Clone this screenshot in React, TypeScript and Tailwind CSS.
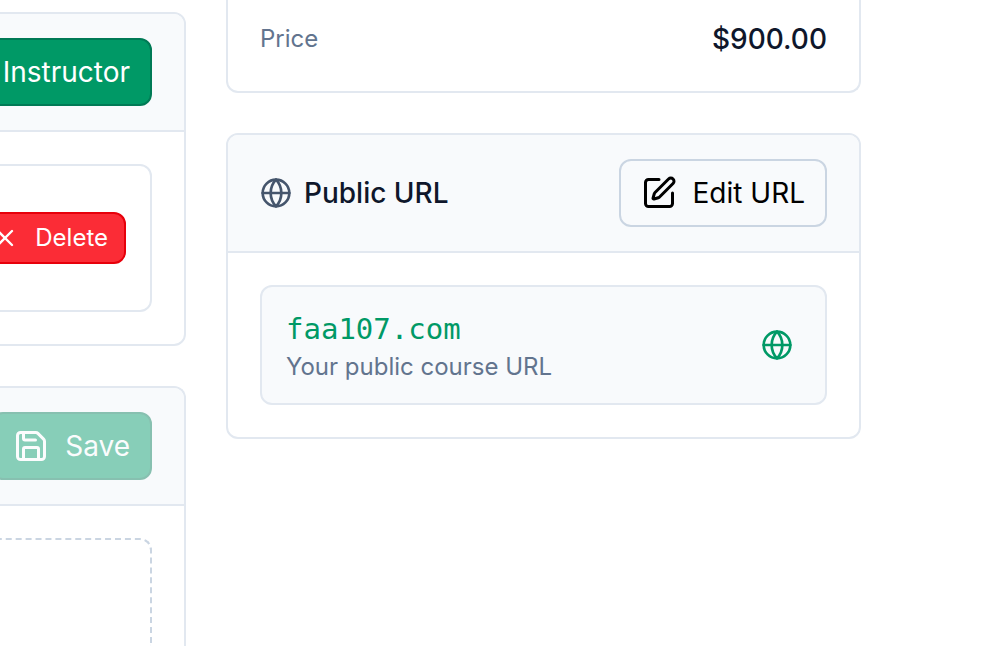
import type { ReactNode } from "react";
import { Globe, Save, SquarePen, X } from "lucide-react";
import { clsx } from "clsx";

const variants = {
  primary: "border-[#007a55] bg-[#009966] text-white",
  outline: "border-[#cad5e2] bg-[#f8fafc] text-black",
};

function Button({
  variant,
  disabled,
  className,
  children,
}: {
  variant: keyof typeof variants;
  disabled?: boolean;
  className?: string;
  children: ReactNode;
}) {
  return (
    <button
      type="button"
      disabled={disabled}
      className={clsx(
        "flex h-[68px] shrink-0 items-center gap-4 rounded-xl border-2 px-5 text-[28px]",
        "disabled:opacity-45",
        variants[variant],
        className
      )}
    >
      {children}
    </button>
  );
}

function CardHeader({ children }: { children: ReactNode }) {
  return (
    <header className="flex items-center justify-end border-b-2 border-slate-200 bg-[#f8fafc] px-8 py-6">
      {children}
    </header>
  );
}

export default function App() {
  return (
    <main className="flex h-screen gap-10 overflow-hidden bg-white font-['Inter',sans-serif] text-slate-900">
      {/* Main column, scrolled partly off the left edge */}
      <div className="-ml-20 flex w-[266px] shrink-0 flex-col gap-10 pt-3">
        <section className="overflow-hidden rounded-xl border-2 border-slate-200">
          <CardHeader>
            <Button variant="primary" className="pl-16">
              Instructor
            </Button>
          </CardHeader>
          <div className="p-8">
            <div className="flex h-[148px] items-center justify-end rounded-xl border-2 border-slate-200 px-6">
              <button
                type="button"
                className="flex h-[52px] shrink-0 items-center gap-4 rounded-xl border-2 border-[#e7000b] bg-[#fb2c36] px-4 text-2xl text-white"
              >
                <X size={28} />
                Delete
              </button>
            </div>
          </div>
        </section>

        <section className="flex flex-1 flex-col overflow-hidden rounded-t-xl border-2 border-b-0 border-slate-200">
          <CardHeader>
            <Button variant="primary" disabled>
              <Save size={36} />
              Save
            </Button>
          </CardHeader>
          <div className="flex flex-1 px-8 pt-8">
            <div className="flex-1 rounded-t-xl border-2 border-b-0 border-dashed border-slate-300" />
          </div>
        </section>
      </div>

      {/* Sidebar */}
      <aside className="mr-[145px] flex min-w-0 flex-1 flex-col gap-10">
        <section className="rounded-b-xl border-2 border-t-0 border-slate-200 px-8 pt-[19px] pb-8">
          <dl className="flex items-center justify-between">
            <dt className="text-2xl text-slate-500">Price</dt>
            <dd className="text-[28px] leading-10 font-medium">$900.00</dd>
          </dl>
        </section>

        <section className="overflow-hidden rounded-xl border-2 border-slate-200">
          <CardHeader>
            <h2 className="flex flex-1 items-center gap-3 text-[28px] font-medium">
              <Globe size={32} className="text-slate-600" />
              Public URL
            </h2>
            <Button variant="outline">
              <SquarePen size={36} />
              Edit URL
            </Button>
          </CardHeader>
          <div className="p-8">
            <div className="flex items-center justify-between rounded-xl border-2 border-slate-200 bg-[#f8fafc] px-6">
              <div className="pt-6 pb-4">
                <a
                  href="https://faa107.com"
                  className="block font-['DejaVu_Sans_Mono',monospace] text-[29px] leading-9 text-[#009966]"
                >
                  faa107.com
                </a>
                <p className="text-2xl leading-10 text-slate-500">Your public course URL</p>
              </div>
              <Globe size={32} className="mr-2 text-[#009966]" />
            </div>
          </div>
        </section>
      </aside>
    </main>
  );
}
